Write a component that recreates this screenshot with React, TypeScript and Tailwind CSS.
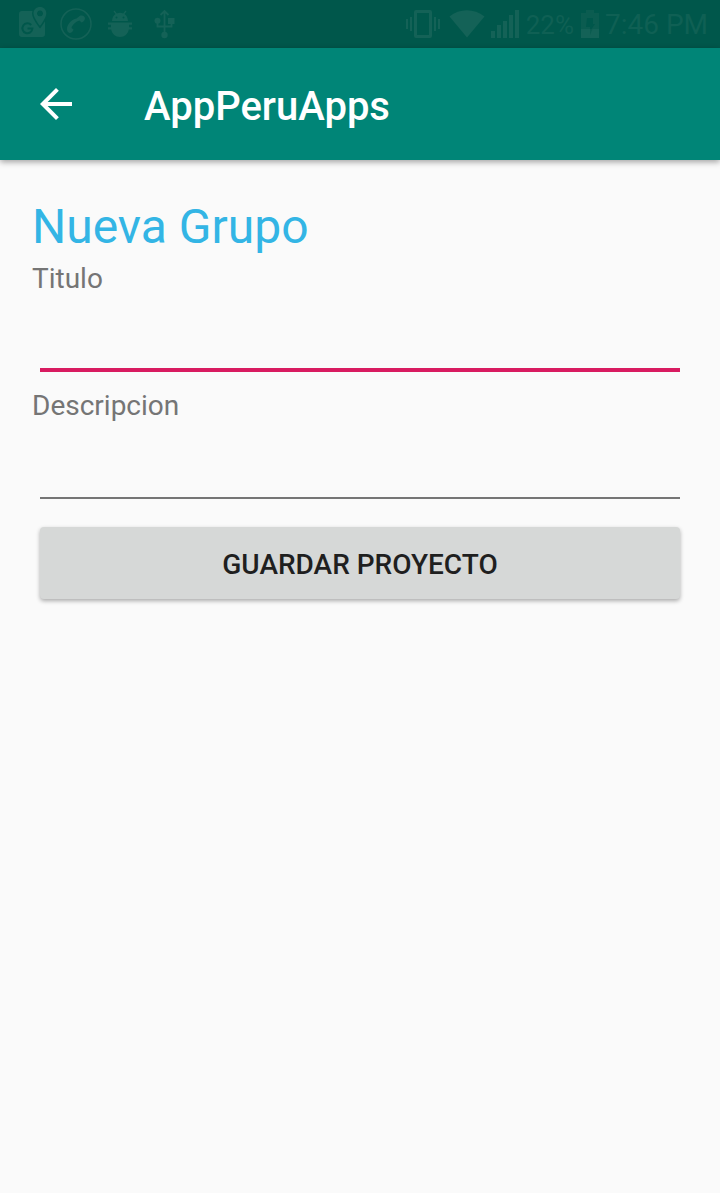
import { useState } from "react";

function StatusBar() {
  return (
    <div className="flex h-12 items-center justify-between bg-[#00574b] pl-[18px] pr-3 text-[#146257]">
      <svg width="160" height="48" viewBox="18 0 160 48" fill="none" aria-hidden="true">
        <path fill="currentColor" d="M22 11H42a3 3 0 0 1 3 3V34a3 3 0 0 1-3 3H22a3 3 0 0 1-3-3V14a3 3 0 0 1 3-3Z" />
        <path d="M31.200 25a5 5 0 1 0 1.200 3.500H27.500" stroke="#00574b" strokeWidth="2" />
        <path d="M40 7c-3.700 0-6.500 2.700-6.500 6.300 0 4.700 6.500 12.700 6.500 12.700s6.300-8 6.300-12.700C46.300 9.700 43.700 7 40 7Z" stroke="#00574b" strokeWidth="3" />
        <path fill="#00574b" d="M40 10.500a3 3 0 1 1 0 6 3 3 0 0 1 0-6Z" />
        <path fill="currentColor" fillRule="evenodd" d="M40 7c-3.700 0-6.500 2.700-6.500 6.300 0 4.700 6.500 12.700 6.500 12.700s6.300-8 6.300-12.700C46.300 9.700 43.700 7 40 7Zm0 3.500a3 3 0 1 0 0 6 3 3 0 0 0 0-6Z" />
        <circle cx="76" cy="24" r="15" stroke="currentColor" strokeWidth="1.500" />
        <path fill="currentColor" d="M76.500 18.500L80 15.800C82.500 15 85 16 85 18.500C84.500 20.500 83.500 22 81.500 22.500L79.500 20.500C76 21.300 72 25 71.500 28L73.500 29.500C73 31.500 71.500 33 69.500 33C67.500 32.500 66.800 30.500 67 28C68 23.500 71.500 19.500 76.500 18.500Z" />
        <path fill="currentColor" d="M112 21c.2-3.200 1.400-5.400 3.600-6.900L113.500 11.500l1-.9 2.300 2.800c2-.8 4.400-.8 6.400 0l2.300-2.800 1 .9-2.100 2.600c2.200 1.500 3.400 3.700 3.600 6.900ZM108 22.500h24v2.200h-3v2.600h3v2.200h-3.200c-.7 4.500-4.300 7.500-8.800 7.500s-8.100-3-8.800-7.500H108v-2.200h3v-2.600h-3Z" />
        <circle cx="116.500" cy="17.500" r="1" fill="#00574b" />
        <circle cx="123.500" cy="17.500" r="1" fill="#00574b" />
        <path d="M164.500 12V34M157.500 21V26.500H171.500V20M160.500 15L164.500 11L168.500 15" stroke="currentColor" strokeWidth="1.800" />
        <path fill="currentColor" d="M168 18h6.500v6H168Z" />
        <circle cx="157.500" cy="20.800" r="3" fill="currentColor" />
        <circle cx="164.500" cy="35" r="3.200" fill="currentColor" />
      </svg>
      <div className="flex items-center">
        <svg width="116" height="48" viewBox="404 0 116 48" fill="none" aria-hidden="true">
          <path fill="currentColor" fillRule="evenodd" d="M416 10h14a2 2 0 0 1 2 2v24a2 2 0 0 1-2 2h-14a2 2 0 0 1-2-2V12a2 2 0 0 1 2-2Zm1 3v22h12V13Z" />
          <path fill="currentColor" d="M406 19h2v10h-2ZM410 17h2v14h-2ZM434 17h2v14h-2ZM438 19h2v10h-2Z" />
          <path fill="currentColor" d="M467 37.500L449.500 16.500c10-8.500 24.500-8.500 35 0Z" />
          <path fill="currentColor" d="M491 31h4v7h-4ZM497 25h4v13h-4ZM503 21h4v17h-4ZM509 15h4v23h-4ZM515 10h4v28h-4Z" />
        </svg>
        <span className="ml-1.5 pt-0.5 text-[26px] leading-[50px] text-[#0f6054]">22%</span>
        <svg className="ml-1.5" width="20" height="48" viewBox="580 0 20 48" aria-hidden="true">
          <path fill="#0b5c50" d="M586 10h8v3h5v16h-18V13h5Z" />
          <path fill="#146257" d="M581 29h18v9h-18Z" />
          <path fill="#00574b" d="M587 18h6v6h2l-3.500 5h-1.500v-2h-4Z" />
          <path fill="#0b5c50" d="M590 29h2.500l-2.500 6Z" />
        </svg>
        <span className="ml-[5px] pt-0.5 text-[28px] leading-[50px] text-[#0f6054]">7:46 PM</span>
      </div>
    </div>
  );
}

function AppBar() {
  return (
    <header className="flex h-28 items-center bg-[#008577] px-10 text-white shadow-[0_2px_6px_rgba(0,0,0,0.36)]">
      <button type="button" aria-label="Volver" className="mr-[72px]">
        <svg width="32" height="32" viewBox="4 4 16 16" fill="currentColor" className="block" aria-hidden="true">
          <path d="M20 11H7.830l5.590-5.590L12 4l-8 8 8 8 1.410-1.410L7.830 13H20v-2z" />
        </svg>
      </button>
      <h1 className="pt-1.5 text-[40px] font-medium leading-[48px]">AppPeruApps</h1>
    </header>
  );
}

type FieldProps = { id: string; label: string; active: boolean; onActivate: () => void };

function Field({ id, label, active, onActivate }: FieldProps) {
  return (
    <div className="flex flex-col">
      <label htmlFor={id} className="text-[28px] leading-[34px] text-[#757575]">
        {label}
      </label>
      <input
        id={id}
        type="text"
        onFocus={onActivate}
        className={`mx-2 h-[76px] bg-transparent pt-6 text-4xl text-[#212121] outline-none ${
          active ? "border-b-4 border-[#d81b60]" : "border-b-2 border-[#757575]"
        }`}
      />
    </div>
  );
}

export default function App() {
  const [active, setActive] = useState("titulo");
  return (
    <div className="min-h-screen bg-[#fafafa] font-[Roboto,sans-serif]">
      <StatusBar />
      <AppBar />
      <main className="px-8 pt-8">
        <h2 className="text-5xl leading-[70px] text-[#33b5e5]">Nueva Grupo</h2>
        <form className="flex flex-col gap-[17px]" onSubmit={(event) => event.preventDefault()}>
          <Field id="titulo" label="Titulo" active={active === "titulo"} onActivate={() => setActive("titulo")} />
          <Field
            id="descripcion"
            label="Descripcion"
            active={active === "descripcion"}
            onActivate={() => setActive("descripcion")}
          />
          <button
            type="submit"
            className="mx-2 mt-[11px] h-[72px] rounded bg-[#d6d8d7] pt-1 text-[28px] font-medium uppercase text-[#1f1f1f] shadow-[0_2px_4px_rgba(0,0,0,0.32)]"
          >
            Guardar proyecto
          </button>
        </form>
      </main>
    </div>
  );
}
